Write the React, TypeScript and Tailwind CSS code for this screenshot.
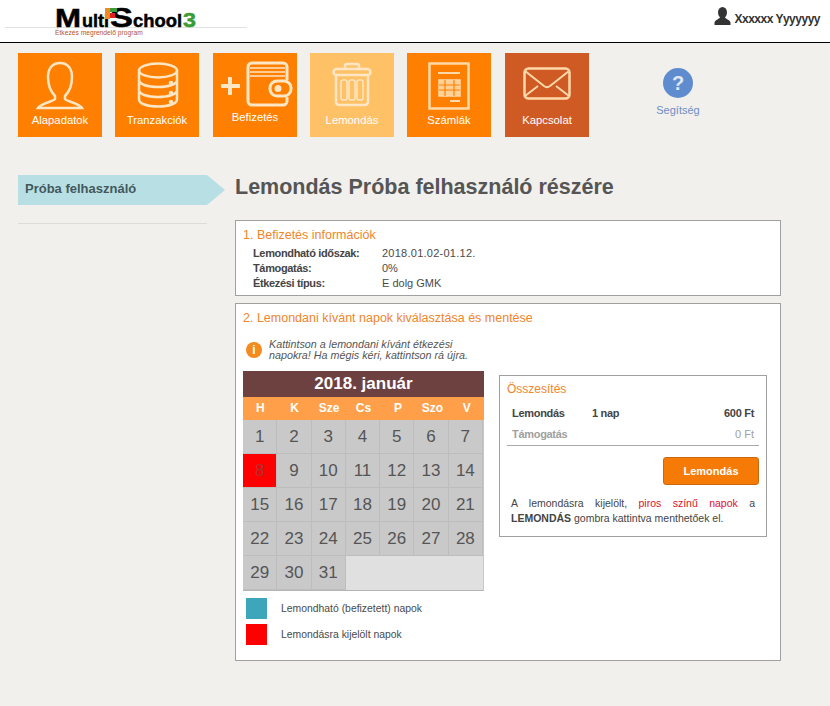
import type { ReactNode } from "react";

const days = Array.from({ length: 31 }, (_, i) => i + 1);
const weekdays = ["H", "K", "Sze", "Cs", "P", "Szo", "V"];

function Tile({ label, bg, textY, children }: { label: string; bg: string; textY: string; children: ReactNode }) {
  return (
    <div className={`w-[84px] h-[84px] shrink-0 flex flex-col items-center text-white text-[11.300px] ${bg}`}>
      <div className="h-[60px] w-full flex items-center justify-center">{children}</div>
      <div className={textY}>{label}</div>
    </div>
  );
}

export default function App() {
  return (
    <div className="w-[830px] h-[706px] overflow-hidden bg-[#f1f0ec] text-[#4a4a4a] font-['Liberation_Sans',sans-serif]">
      {/* Header */}
      <div className="h-[43px] bg-white border-b border-black flex relative">
        <div className="absolute left-[5px] top-[27px] w-[242px] h-px bg-[#e2e2e2]" />
        <div className="ml-[55px] mt-[1px] relative">
          {/* logo */}
          <svg width="145" height="34" viewBox="0 0 145 34" className="block -mb-[6px]" fontFamily="Liberation Sans" fontWeight="bold" stroke="#000" strokeWidth="0.5">
            <text x="0" y="26" fontSize="26" textLength="26" lengthAdjust="spacingAndGlyphs">M</text>
            <text x="27" y="26" fontSize="19" textLength="27" lengthAdjust="spacingAndGlyphs">ulti</text>
            <text x="55" y="26" fontSize="27" textLength="23" lengthAdjust="spacingAndGlyphs">S</text>
            <text x="78" y="26" fontSize="19" textLength="49" lengthAdjust="spacingAndGlyphs">chool</text>
            <text x="128" y="26" fontSize="21" textLength="13" lengthAdjust="spacingAndGlyphs" fill="#3c9c35" stroke="#3c9c35">3</text>
            <g stroke="none">
              <rect x="50" y="7" width="5" height="11" fill="#f08a24" />
              <rect x="55" y="7" width="7" height="4" fill="#3c9c35" />
              <rect x="55" y="12" width="5" height="5" fill="#e02020" />
            </g>
          </svg>
          <div className="mt-[1px] text-[6.700px] leading-[6px] text-[#b5542a]">Étkezés megrendelő program</div>
        </div>
        <div className="ml-auto mr-[10px] mt-[8px] flex items-center h-[20px] text-[12px] font-bold text-[#333] tracking-[-0.5px]">
          <svg width="17" height="18" viewBox="0 0 17 18" className="mr-[3px] -mt-[4px]" fill="#333">
            <ellipse cx="8.5" cy="5.5" rx="4.5" ry="5.5" />
            <path d="M6 10c0 2-5 2.500-5.500 5.500V18h16v-2.500C16 12.500 11 12 11 10z" />
          </svg>
          <span className="mt-[2px]">Xxxxxx Yyyyyyy</span>
        </div>
      </div>

      {/* Menu tiles */}
      <div className="flex mt-[10px] ml-[18px] gap-[13px] h-[84px] relative">
        <Tile label="Alapadatok" bg="bg-[#ff8000]" textY="-mt-[1px]">
          <svg width="52" height="52" viewBox="0 0 52 52" fill="none" stroke="#ffe6c4" strokeWidth="2.5" className="mt-[6px]">
            <path d="M26 3c-8 0-12 6-12 14 0 8 3 15 7 19v3c0 2-14 4-17 9h44c-3-5-17-7-17-9v-3c4-4 7-11 7-19 0-8-4-14-12-14z" />
          </svg>
        </Tile>
        <Tile label="Tranzakciók" bg="bg-[#ff8000]" textY="-mt-[1px]">
          <svg width="42" height="46" viewBox="0 0 42 46" fill="none" stroke="#ffe6c4" strokeWidth="2.500" className="mt-[3px] ml-[1px]">
            <ellipse cx="21" cy="8.500" rx="19" ry="7" />
            <path d="M2 8.500v29c0 4 8 7 19 7s19-3 19-7v-29M2 18c0 4 8 7 19 7s19-3 19-7M2 28c0 4 8 7 19 7s19-3 19-7" />
            <circle cx="34" cy="21" r="1" fill="#ffe6c4" />
            <circle cx="34" cy="31" r="1" fill="#ffe6c4" />
            <circle cx="34" cy="40" r="1" fill="#ffe6c4" />
          </svg>
        </Tile>
        <div className="ml-[1px]">
          <Tile label="Befizetés" bg="bg-[#ff8000]" textY="-mt-[4px]">
            <svg width="78" height="48" viewBox="0 0 78 48" fill="none" stroke="#ffe6c4" strokeWidth="3" className="mt-[3px]">
              <path d="M14 16v18M5 25h19" strokeWidth="4" />
              <path d="M71 19V6a4 4 0 0 0-4-4H36a4 4 0 0 0-4 4v34a4 4 0 0 0 4 4h31a4 4 0 0 0 4-4v-4" />
              <path d="M34 7h35M34 11h35M34 15h35" strokeWidth="1.500" />
              <rect x="54" y="20" width="21" height="15" rx="7" />
              <circle cx="62" cy="27.500" r="2" fill="#ffe6c4" />
            </svg>
          </Tile>
        </div>
        <Tile label="Lemondás" bg="bg-[#ffc166]" textY="-mt-[1px]">
          <svg width="40" height="46" viewBox="0 0 40 46" fill="none" stroke="#ffe6c4" strokeWidth="2.500" className="mt-[4px]">
            <rect x="1.500" y="7" width="37" height="6" rx="3" />
            <path d="M13 7V4a2 2 0 0 1 2-2h10a2 2 0 0 1 2 2v3" />
            <path d="M4 13v27a3 3 0 0 0 3 3h26a3 3 0 0 0 3-3V13" />
            <rect x="9" y="18" width="6" height="20" rx="2" strokeWidth="1.500" />
            <rect x="17" y="18" width="6" height="20" rx="2" strokeWidth="1.500" />
            <rect x="25" y="18" width="6" height="20" rx="2" strokeWidth="1.500" />
          </svg>
        </Tile>
        <Tile label="Számlák" bg="bg-[#ff8000]" textY="-mt-[1px]">
          <svg width="42" height="48" viewBox="0 0 42 48" fill="none" stroke="#ffd9a8" strokeWidth="2" className="mt-[6px]">
            <rect x="1.500" y="1.500" width="39" height="45" strokeWidth="2.500" />
            <path d="M10 11h22" />
            <rect x="11" y="18" width="21" height="16" strokeWidth="1.500" fill="#ffcf94" />
            <path d="M11 23h21M11 28h21M17 18v16M26 18v16" stroke="#ff8000" strokeWidth="1.200" />
            <path d="M22 39h10" />
          </svg>
        </Tile>
        <div className="ml-[1px]">
          <Tile label="Kapcsolat" bg="bg-[#d05a24]" textY="-mt-[1px]">
            <svg width="48" height="34" viewBox="0 0 48 34" fill="none" stroke="#ffd9a8" strokeWidth="2.500" className="mt-[2px]">
              <rect x="1.500" y="1.500" width="45" height="30" rx="4" />
              <path d="M2 4l19 15c2 1.500 4 1.500 6 0L46 4M2 29l13-10M46 29L33 19" strokeWidth="2" />
            </svg>
          </Tile>
        </div>
        <div className="ml-[41px] w-[70px] flex flex-col items-center pt-[15px] text-[11px] text-[#6d8fc4]">
          <div className="w-[30px] h-[30px] rounded-full bg-[#5f8cce] text-[#dfe8f5] text-[20px] font-bold leading-[30px] text-center">?</div>
          <div className="mt-[5px] leading-[14px]">Segítség</div>
        </div>
      </div>

      {/* Content */}
      <div className="flex mt-[38px] ml-[18px]">
        <div className="w-[207px] shrink-0">
          <div className="flex h-[30px]">
            <div className="w-[189px] bg-[#b8e0e4] pl-[7px] text-[13px] font-bold leading-[27px] text-[#44585c]">Próba felhasználó</div>
            <div className="w-0 h-0 border-y-[15px] border-y-transparent border-l-[18px] border-l-[#b8e0e4]" />
          </div>
          <div className="mt-[18px] w-[189px] h-px bg-[#dddcd8]" />
        </div>

        <div className="ml-[10px] w-[546px]">
          <h1 className="text-[21.500px] leading-[24px] font-bold text-[#555] mb-[21px]">Lemondás Próba felhasználó részére</h1>

          <div className="h-[76px] bg-white border border-[#a0a0a0] pl-[7px] pt-[6px] mb-[7px]">
            <div className="text-[12.500px] leading-[16px] text-[#f0852a]">1. Befizetés információk</div>
            <div className="mt-[3px] ml-[10px] grid grid-cols-[128px_1fr] text-[11px] leading-[15px]">
              <b className="text-[#444] tracking-[-0.35px]">Lemondható időszak:</b><span className="tracking-[0.25px] ml-[1px]">2018.01.02-01.12.</span>
              <b className="text-[#444] tracking-[-0.35px]">Támogatás:</b><span className="ml-[1px]">0%</span>
              <b className="text-[#444] tracking-[-0.35px]">Étkezési típus:</b><span className="ml-[1px]">E dolg GMK</span>
            </div>
          </div>

          <div className="h-[358px] bg-white border border-[#a0a0a0] pl-[7px] pt-[6px]">
            <div className="text-[12.500px] leading-[16px] text-[#f0852a]">2. Lemondani kívánt napok kiválasztása és mentése</div>
            <div className="flex mt-[13px] ml-[3px] items-center">
              <div className="w-[16px] h-[16px] rounded-full bg-[#f58a1f] text-white text-[12px] font-bold leading-[16px] text-center">i</div>
              <div className="ml-[7px] text-[10.750px] leading-[11px] italic text-[#555]">
                Kattintson a lemondani kívánt étkezési<br />napokra! Ha mégis kéri, kattintson rá újra.
              </div>
            </div>

            <div className="flex mt-[10px]">
              <div className="w-[241px] shrink-0">
                <div className="h-[26px] bg-[#6e4141] text-white text-[17px] font-bold leading-[26px] text-center">2018. január</div>
                <div className="grid grid-cols-7 h-[23px] bg-[#ff9f4a] text-white text-[12px] font-bold leading-[23px] text-center">
                  {weekdays.map((d) => <div key={d}>{d}</div>)}
                </div>
                <div className="grid grid-cols-7 auto-rows-[34px] bg-[#e0e0e0] border-b border-b-[#b5b5b5] border-r border-r-[#c8c8c8]">
                  {days.map((d) => (
                    <div
                      key={d}
                      className={`flex items-center justify-center text-[17px] text-[#555] border-r border-b border-[#bdbdbd] ${d === 8 ? "bg-[#fe0000] text-[#b03030]" : "bg-[#c9c9c9]"}`}
                    >
                      {d}
                    </div>
                  ))}
                </div>
                <div className="mt-[7px] ml-[3px] flex items-center h-[21px] text-[10.400px]">
                  <div className="w-[21px] h-[21px] bg-[#3ea6bb] mr-[14px]" />Lemondható (befizetett) napok
                </div>
                <div className="mt-[5px] ml-[3px] flex items-center h-[21px] text-[10.400px]">
                  <div className="w-[21px] h-[21px] bg-[#fe0000] mr-[14px]" />Lemondásra kijelölt napok
                </div>
              </div>

              <div className="ml-[15px] mt-[4px] w-[268px] h-[162px] border border-[#a0a0a0] px-[7px] pt-[5px]">
                <div className="text-[12px] leading-[16px] text-[#f0852a]">Összesítés</div>
                <div className="mt-[8px] px-[5px] flex text-[11px] leading-[16px] font-bold text-[#444] tracking-[-0.3px]">
                  <span className="w-[80px]">Lemondás</span><span>1 nap</span><span className="ml-auto">600 Ft</span>
                </div>
                <div className="mt-[5px] pl-[5px] pr-[5px] pb-[3px] flex text-[11px] leading-[16px] text-[#a0a0a0] border-b border-[#a8a8a8]">
                  <b className="tracking-[-0.3px]">Támogatás</b><span className="ml-auto">0 Ft</span>
                </div>
                <div className="flex justify-end mt-[11px]">
                  <button className="w-[96px] h-[28px] rounded-[3px] bg-[#f57a06] border border-[#c9690e] text-white text-[11px] font-bold">Lemondás</button>
                </div>
                <p className="mt-[11px] px-[4px] text-[10.500px] leading-[15px] text-[#444] text-justify">
                  A lemondásra kijelölt, <span className="text-[#e0102a]">piros színű napok</span> a <b>LEMONDÁS</b> gombra kattintva menthetőek el.
                </p>
              </div>
            </div>
          </div>
        </div>
      </div>
    </div>
  );
}
